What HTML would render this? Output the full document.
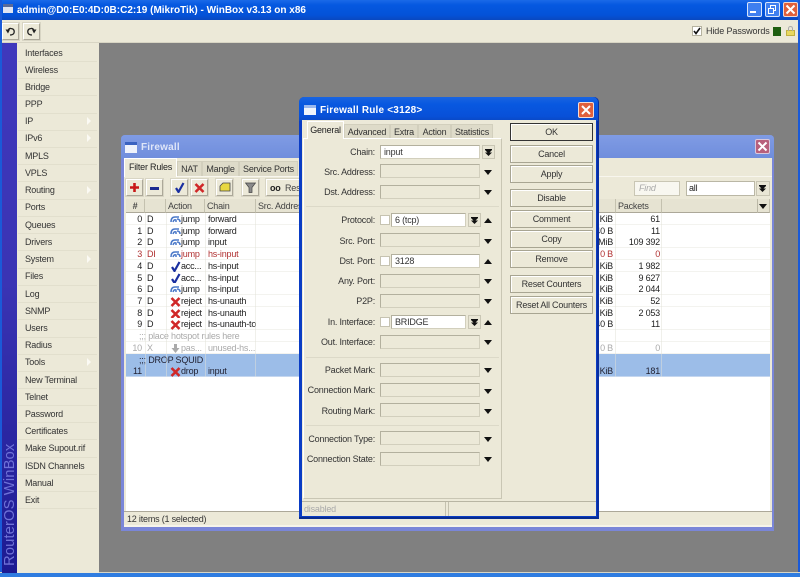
<!DOCTYPE html>
<html><head><meta charset="utf-8"><title>WinBox</title>
<style>
html,body{margin:0;padding:0;width:800px;height:577px;overflow:hidden;background:#808080}
#r{position:absolute;left:0;top:0;width:800px;height:577px;overflow:hidden;font:9px "Liberation Sans",sans-serif;letter-spacing:-.2px;color:#222;filter:blur(.3px)}
#r div,#r span,#r svg{position:absolute;box-sizing:border-box}
.t{white-space:nowrap;line-height:12px;height:12px}
.m{left:25px;white-space:nowrap;line-height:12px;height:12px;color:#333}
.ms{left:18px;width:79px;height:1px;background:#f6f4ea;border-top:1px solid #e2dfcd}
.tri{left:87px;width:0;height:0;border-left:4px solid #fbfaf4;border-top:4px solid transparent;border-bottom:4px solid transparent}
.tb{background:#ece9d8;border:1px solid;border-color:#fff #aca899 #aca899 #fff;box-shadow:0 0 0 1px #d8d5c4}
.tab{background:#dedbc9;border:1px solid #d2cfbd;border-bottom:0;text-align:center;line-height:15px;color:#333;white-space:nowrap}
.tabA{background:#ece9d8;border:1px solid #fff;border-bottom:0;text-align:center;color:#222;white-space:nowrap}
.h{top:199px;height:14px;background:#e6e3d2;border-right:1px solid #c4c1af;border-bottom:1px solid #aca899;line-height:14px;padding-left:2px;color:#444;white-space:nowrap;overflow:hidden}
.row{left:126px;width:644px;height:12px;background:#fff;border-bottom:1px solid #f3f3ef;line-height:12px;color:#222}
.row span{white-space:nowrap;top:0}
.n{left:0;width:16px;text-align:right}.d{left:21px}.a{left:55px}.c{left:82px}.b{left:440px;width:47px;text-align:right}.p{left:490px;width:44px;text-align:right}
.ic{left:44px;top:1px;width:11px;height:11px}
.red{color:#b03030}.gr{color:#aaa}.sel{background:#9cbde8;border-bottom:1px solid #c4d6ef;color:#223}
.l{left:300px;width:75px;text-align:right;white-space:nowrap;line-height:12px;height:12px;color:#333}
.f{left:380px;width:100px;height:14px;background:#ece9d8;border:1px solid;border-color:#b3b09e #d2cfbd #d2cfbd #b3b09e}
.w{background:#fff;line-height:12px;padding-left:3px;color:#333;white-space:nowrap}
.cb{left:380px;width:10px;height:10px;background:#fff;border:1px solid #c6c3b1}
.bn{left:468px;width:13px;height:14px;background:#e9e6d5;border:1px solid #c9c6b4}
.dn{left:484px;width:0;height:0;border-left:4px solid transparent;border-right:4px solid transparent;border-top:5px solid #111}
.up{left:484px;width:0;height:0;border-left:4px solid transparent;border-right:4px solid transparent;border-bottom:5px solid #111}
.btn{left:510px;width:83px;height:18px;background:#ece9d8;border:1px solid #a8a592;box-shadow:inset 1px 1px 0 #fff;text-align:center;line-height:16px;color:#333;white-space:nowrap}
.sp{left:306px;width:193px;height:1px;background:#dcd9c8}
.dbl{width:7px;height:7px}
</style></head><body><div id="r">
<svg width="0" height="0" style="left:0;top:0"><defs>
<symbol id="j" viewBox="0 0 11 11"><path d="M1 8 Q1 3 5 3 L9 3 M10 8 Q10 5 7 5 M3 8 Q4 5 6 6 L6 8" fill="none" stroke="#4a78c8" stroke-width="1.5"/></symbol>
<symbol id="k" viewBox="0 0 11 11"><path d="M2 6 L4.5 10 L9.5 1" fill="none" stroke="#1a2fa0" stroke-width="2.2"/></symbol>
<symbol id="x" viewBox="0 0 11 11"><path d="M1.5 2 L9.5 10 M9.5 2 L1.5 10" fill="none" stroke="#d02828" stroke-width="2.6"/></symbol>
<symbol id="dd" viewBox="0 0 7 7"><path d="M0 0H7V1H0Z M0 1L7 1L3.5 4.5Z M0 3.5L7 3.5L3.5 7Z" fill="#111"/></symbol>
</defs></svg>

<!-- main window chrome -->
<div style="left:0;top:0;width:800px;height:20px;background:linear-gradient(#1a6ae8,#0558e0 25%,#0452d8 75%,#0a48c0)"></div>
<div style="left:3px;top:4px;width:10px;height:9px;background:#dfe4f2;border-top:3px solid #5a6a98"></div>
<div class="t" style="left:17px;top:4px;font:bold 10px 'Liberation Sans',sans-serif;letter-spacing:0;color:#fff;line-height:13px;height:13px">admin@D0:E0:4D:0B:C2:19 (MikroTik) - WinBox v3.13 on x86</div>
<div style="left:747px;top:2px;width:15px;height:15px;background:#3f7ff0;border:1px solid #d8e4fa;border-radius:2px"></div>
<div style="left:750px;top:11px;width:6px;height:2px;background:#fff"></div>
<div style="left:765px;top:2px;width:15px;height:15px;background:#3f7ff0;border:1px solid #d8e4fa;border-radius:2px"></div>
<div style="left:770px;top:5px;width:6px;height:6px;border:1px solid #fff"></div>
<div style="left:768px;top:8px;width:6px;height:6px;border:1px solid #fff;background:#3f7ff0"></div>
<div style="left:783px;top:2px;width:15px;height:15px;background:#e0603c;border:1px solid #f0d8d0;border-radius:2px"></div>
<svg style="left:785px;top:4px" width="11" height="11"><path d="M1.5 1.5 L9.5 9.5 M9.5 1.5 L1.5 9.5" stroke="#fff" stroke-width="2"/></svg>

<div style="left:0;top:20px;width:800px;height:23px;background:#ece9d8;border-bottom:1px solid #d8d5c4"></div>
<div class="tb" style="left:2px;top:23px;width:17px;height:17px"></div>
<svg style="left:5px;top:26px" width="11" height="11"><path d="M3 6 Q3 2 6 2.5 Q10 3 9 7 Q8 9 5 9" fill="none" stroke="#222" stroke-width="1.3"/><path d="M0.5 3.5 L5 3.5 L3 7.5Z" fill="#222"/></svg>
<div class="tb" style="left:23px;top:23px;width:17px;height:17px"></div>
<svg style="left:26px;top:26px" width="11" height="11"><path d="M8 6 Q8 2 5 2.5 Q1 3 2 7 Q3 9 6 9" fill="none" stroke="#222" stroke-width="1.3"/><path d="M10.5 3.5 L6 3.5 L8 7.5Z" fill="#222"/></svg>

<div style="left:692px;top:26px;width:10px;height:10px;background:#fff;border:1px solid #b5b29f"></div>
<svg style="left:693px;top:27px" width="8" height="8"><path d="M1 4 L3 6.5 L7 1" fill="none" stroke="#111" stroke-width="1.6"/></svg>
<div class="t" style="left:706px;top:25px;color:#333;letter-spacing:-.1px">Hide Passwords</div>
<div style="left:773px;top:27px;width:8px;height:9px;background:#1f5f10"></div>
<div style="left:786px;top:30px;width:9px;height:6px;background:#e8d860;border:1px solid #c0b040"></div>
<div style="left:788px;top:26px;width:5px;height:5px;border:1px solid #aaa;border-bottom:0;border-radius:3px 3px 0 0"></div>

<!-- work area -->
<div style="left:99px;top:43px;width:699px;height:530px;background:#808080"></div>
<div style="left:0;top:0;width:2px;height:577px;background:#1a5ad8"></div>
<div style="left:798px;top:0;width:2px;height:577px;background:#1a5ad8"></div>
<div style="left:0;top:572px;width:800px;height:1px;background:#d8d5c4"></div>
<div style="left:0;top:573px;width:800px;height:4px;background:#2f7ce0"></div>

<!-- sidebar -->
<div style="left:2px;top:43px;width:15px;height:530px;background:linear-gradient(#3f38bc,#3a34b4 45%,#1c1a92)"></div>
<div style="left:17px;top:43px;width:82px;height:530px;background:#ece9d8"></div>
<div style="left:2px;top:436px;width:16px;height:130px;line-height:16px;writing-mode:vertical-rl;transform:rotate(180deg);font-size:14.8px;letter-spacing:.1px;color:#6f72d8;white-space:nowrap;text-align:left">RouterOS WinBox</div>
<div class="m" style="top:47px">Interfaces</div><div class="ms" style="top:61px"></div>
<div class="m" style="top:64px">Wireless</div><div class="ms" style="top:78px"></div>
<div class="m" style="top:81px">Bridge</div><div class="ms" style="top:95px"></div>
<div class="m" style="top:98px">PPP</div><div class="ms" style="top:113px"></div>
<div class="m" style="top:115px">IP</div><div class="tri" style="top:117px"></div><div class="ms" style="top:130px"></div>
<div class="m" style="top:132px">IPv6</div><div class="tri" style="top:134px"></div><div class="ms" style="top:147px"></div>
<div class="m" style="top:150px">MPLS</div><div class="ms" style="top:164px"></div>
<div class="m" style="top:167px">VPLS</div><div class="ms" style="top:181px"></div>
<div class="m" style="top:184px">Routing</div><div class="tri" style="top:186px"></div><div class="ms" style="top:199px"></div>
<div class="m" style="top:201px">Ports</div><div class="ms" style="top:216px"></div>
<div class="m" style="top:219px">Queues</div><div class="ms" style="top:233px"></div>
<div class="m" style="top:236px">Drivers</div><div class="ms" style="top:250px"></div>
<div class="m" style="top:253px">System</div><div class="tri" style="top:255px"></div><div class="ms" style="top:268px"></div>
<div class="m" style="top:270px">Files</div><div class="ms" style="top:285px"></div>
<div class="m" style="top:288px">Log</div><div class="ms" style="top:302px"></div>
<div class="m" style="top:305px">SNMP</div><div class="ms" style="top:319px"></div>
<div class="m" style="top:322px">Users</div><div class="ms" style="top:337px"></div>
<div class="m" style="top:339px">Radius</div><div class="ms" style="top:354px"></div>
<div class="m" style="top:356px">Tools</div><div class="tri" style="top:358px"></div><div class="ms" style="top:371px"></div>
<div class="m" style="top:374px">New Terminal</div><div class="ms" style="top:388px"></div>
<div class="m" style="top:391px">Telnet</div><div class="ms" style="top:405px"></div>
<div class="m" style="top:408px">Password</div><div class="ms" style="top:422px"></div>
<div class="m" style="top:425px">Certificates</div><div class="ms" style="top:439px"></div>
<div class="m" style="top:442px">Make Supout.rif</div><div class="ms" style="top:457px"></div>
<div class="m" style="top:460px">ISDN Channels</div><div class="ms" style="top:474px"></div>
<div class="m" style="top:477px">Manual</div><div class="ms" style="top:491px"></div>
<div class="m" style="top:494px">Exit</div><div class="ms" style="top:508px"></div>

<!-- Firewall window -->
<div style="left:121px;top:135px;width:653px;height:396px;background:#7a86d8;border-radius:4px 4px 0 0"></div>
<div style="left:121px;top:135px;width:653px;height:24px;background:linear-gradient(#7f9be4,#6f8ddc);border-radius:4px 4px 0 0"></div>
<div style="left:125px;top:142px;width:12px;height:11px;background:#eef2fb;border-top:3px solid #3a62c0"></div>
<div class="t" style="left:141px;top:141px;font:bold 10px 'Liberation Sans',sans-serif;letter-spacing:.2px;color:#dfe6f8;line-height:13px;height:13px">Firewall</div>
<div style="left:755px;top:139px;width:15px;height:15px;background:#b8607c;border:1px solid #d8c8dc;border-radius:2px"></div>
<svg style="left:757px;top:141px" width="11" height="11"><path d="M1.5 1.5 L9.5 9.5 M9.5 1.5 L1.5 9.5" stroke="#fff" stroke-width="2"/></svg>
<div style="left:124px;top:158px;width:648px;height:369px;background:#ece9d8;border-bottom:2px solid #f6f4ea"></div>
<div class="tab" style="left:177px;top:161px;width:25px;height:16px">NAT</div>
<div class="tab" style="left:202px;top:161px;width:37px;height:16px">Mangle</div>
<div class="tab" style="left:239px;top:161px;width:59px;height:16px">Service Ports</div>
<div class="tabA" style="left:124px;top:158px;width:53px;height:19px;line-height:17px">Filter Rules</div>
<div style="left:177px;top:176px;width:595px;height:1px;background:#f8f6ee"></div>

<div class="tb" style="left:126px;top:179px;width:17px;height:17px"></div>
<svg style="left:129px;top:182px" width="11" height="11"><path d="M5.5 1V10M1 5.5H10" stroke="#c81818" stroke-width="2.6"/></svg>
<div class="tb" style="left:146px;top:179px;width:17px;height:17px"></div>
<div style="left:150px;top:187px;width:9px;height:3px;background:#1c2a90"></div>
<div class="tb" style="left:171px;top:179px;width:17px;height:17px"></div>
<svg style="left:174px;top:182px" width="11" height="11"><use href="#k"/></svg>
<div class="tb" style="left:191px;top:179px;width:17px;height:17px"></div>
<svg style="left:194px;top:182px" width="11" height="11"><use href="#x"/></svg>
<div class="tb" style="left:216px;top:179px;width:17px;height:17px"></div>
<svg style="left:219px;top:182px" width="12" height="11"><path d="M1 9V4L4 1H11V9Z" fill="#e8d840" stroke="#444" stroke-width=".8"/></svg>
<div class="tb" style="left:242px;top:179px;width:17px;height:17px"></div>
<svg style="left:245px;top:182px" width="11" height="11"><path d="M0.5 1H10.5L7 5.5V10.5H4V5.5Z" fill="#8a8a8a" stroke="#444" stroke-width=".7"/></svg>
<div class="tb" style="left:266px;top:179px;width:60px;height:17px;padding:0;line-height:15px"></div>
<div class="t" style="left:270px;top:182px;font-weight:bold;color:#222">oo</div>
<div class="t" style="left:285px;top:182px;color:#444">Reset</div>

<div class="t" style="left:634px;top:181px;width:46px;height:15px;background:#f8f7f0;border:1px solid #c9c6b4;color:#aaa;font-style:italic;padding-left:4px;line-height:13px">Find</div>
<div class="t" style="left:686px;top:181px;width:69px;height:15px;background:#fff;border:1px solid #bab7a5;padding-left:2px;line-height:13px">all</div>
<div style="left:756px;top:181px;width:14px;height:15px;background:#e9e6d5;border:1px solid #c9c6b4"></div>
<svg class="dbl" style="left:759px;top:185px"><use href="#dd"/></svg>

<div style="left:126px;top:213px;width:644px;height:298px;background:#fff"></div>
<div class="h" style="left:126px;width:19px;text-align:center;padding:0;font-weight:bold">#</div>
<div class="h" style="left:145px;width:21px"></div>
<div class="h" style="left:166px;width:39px">Action</div>
<div class="h" style="left:205px;width:51px">Chain</div>
<div class="h" style="left:256px;width:360px">Src. Address</div>
<div class="h" style="left:616px;width:46px">Packets</div>
<div class="h" style="left:662px;width:108px"></div>
<div style="left:757px;top:199px;width:13px;height:14px;border-left:1px solid #bbb8a6"></div>
<div class="dn" style="left:759px;top:204px"></div>

<div class="row" style="top:213px"><span class="n">0</span><span class="d">D</span><svg class="ic"><use href="#j"/></svg><span class="a">jump</span><span class="c">forward</span><span class="b">10 KiB</span><span class="p">61</span></div>
<div class="row" style="top:225px"><span class="n">1</span><span class="d">D</span><svg class="ic"><use href="#j"/></svg><span class="a">jump</span><span class="c">forward</span><span class="b">40 B</span><span class="p">11</span></div>
<div class="row" style="top:236px"><span class="n">2</span><span class="d">D</span><svg class="ic"><use href="#j"/></svg><span class="a">jump</span><span class="c">input</span><span class="b">16 MiB</span><span class="p">109 392</span></div>
<div class="row red" style="top:248px"><span class="n">3</span><span class="d">DI</span><svg class="ic"><use href="#j"/></svg><span class="a">jump</span><span class="c">hs-input</span><span class="b">0 B</span><span class="p">0</span></div>
<div class="row" style="top:260px"><span class="n">4</span><span class="d">D</span><svg class="ic"><use href="#k"/></svg><span class="a">acc...</span><span class="c">hs-input</span><span class="b">90 KiB</span><span class="p">1 982</span></div>
<div class="row" style="top:272px"><span class="n">5</span><span class="d">D</span><svg class="ic"><use href="#k"/></svg><span class="a">acc...</span><span class="c">hs-input</span><span class="b">90 KiB</span><span class="p">9 627</span></div>
<div class="row" style="top:283px"><span class="n">6</span><span class="d">D</span><svg class="ic"><use href="#j"/></svg><span class="a">jump</span><span class="c">hs-input</span><span class="b">90 KiB</span><span class="p">2 044</span></div>
<div class="row" style="top:295px"><span class="n">7</span><span class="d">D</span><svg class="ic"><use href="#x"/></svg><span class="a">reject</span><span class="c">hs-unauth</span><span class="b">90 KiB</span><span class="p">52</span></div>
<div class="row" style="top:307px"><span class="n">8</span><span class="d">D</span><svg class="ic"><use href="#x"/></svg><span class="a">reject</span><span class="c">hs-unauth</span><span class="b">90 KiB</span><span class="p">2 053</span></div>
<div class="row" style="top:318px"><span class="n">9</span><span class="d">D</span><svg class="ic"><use href="#x"/></svg><span class="a">reject</span><span class="c">hs-unauth-to</span><span class="b">40 B</span><span class="p">11</span></div>
<div class="row gr" style="top:330px"><span style="left:13px">;;; place hotspot rules here</span></div>
<div class="row gr" style="top:342px"><span class="n">10</span><span class="d">X</span><svg class="ic" viewBox="0 0 11 11"><path d="M4 1H7V5H9.5L5.5 10L1.5 5H4Z" fill="#aaa"/></svg><span class="a">pas...</span><span class="c">unused-hs...</span><span class="b">0 B</span><span class="p">0</span></div>
<div class="row sel" style="top:354px"><span style="left:13px">;;; DROP SQUID</span></div>
<div class="row sel" style="top:365px"><span class="n">11</span><svg class="ic"><use href="#x"/></svg><span class="a">drop</span><span class="c">input</span><span class="b">90 KiB</span><span class="p">181</span></div>
<div style="left:145px;top:213px;width:1px;height:164px;background:rgba(225,225,215,.5)"></div>
<div style="left:166px;top:213px;width:1px;height:164px;background:rgba(225,225,215,.5)"></div>
<div style="left:205px;top:213px;width:1px;height:164px;background:rgba(225,225,215,.5)"></div>
<div style="left:255px;top:213px;width:1px;height:164px;background:rgba(225,225,215,.5)"></div>
<div style="left:615px;top:213px;width:1px;height:164px;background:rgba(225,225,215,.5)"></div>
<div style="left:661px;top:213px;width:1px;height:164px;background:rgba(225,225,215,.5)"></div>
<div style="left:124px;top:511px;width:648px;height:1px;background:#aca899"></div>
<div class="t" style="left:127px;top:513px;color:#333">12 items (1 selected)</div>

<!-- Dialog -->
<div style="left:299px;top:97px;width:300px;height:422px;background:#0a3cc4;border-radius:5px 5px 0 0;border-bottom:2px solid #082c90;border-right:2px solid #0a2ea0"></div>
<div style="left:299px;top:97px;width:299px;height:24px;background:linear-gradient(#1a64e0,#0858e0 30%,#0850d8 80%,#0a48c4);border-radius:5px 5px 0 0"></div>
<div style="left:304px;top:105px;width:12px;height:10px;background:#f0f4fc;border-top:3px solid #9ab8ee"></div>
<div class="t" style="left:320px;top:104px;font:bold 10px 'Liberation Sans',sans-serif;letter-spacing:.2px;color:#fff;line-height:13px;height:13px">Firewall Rule &lt;3128&gt;</div>
<div style="left:578px;top:102px;width:16px;height:16px;background:#e0603c;border:1px solid #f4dcd4;border-radius:2px"></div>
<svg style="left:580px;top:104px" width="12" height="12"><path d="M2 2 L10 10 M10 2 L2 10" stroke="#fff" stroke-width="2"/></svg>
<div style="left:302px;top:120px;width:294px;height:396px;background:#ece9d8"></div>

<div class="tab" style="left:344px;top:124px;width:46px;height:15px">Advanced</div>
<div class="tab" style="left:390px;top:124px;width:28px;height:15px">Extra</div>
<div class="tab" style="left:418px;top:124px;width:33px;height:15px">Action</div>
<div class="tab" style="left:451px;top:124px;width:42px;height:15px">Statistics</div>
<div style="left:303px;top:138px;width:199px;height:361px;border:1px solid;border-color:#fff #c9c6b4 #c9c6b4 #fff"></div>
<div class="tabA" style="left:307px;top:121px;width:37px;height:18px;line-height:16px">General</div>

<div class="l" style="top:146px">Chain:</div><div class="f w" style="top:145px">input</div>
<div class="bn" style="left:482px;top:145px"></div><svg class="dbl" style="left:485px;top:149px"><use href="#dd"/></svg>
<div class="l" style="top:166px">Src. Address:</div><div class="f" style="top:164px"></div><div class="dn" style="top:170px"></div>
<div class="l" style="top:186px">Dst. Address:</div><div class="f" style="top:185px"></div><div class="dn" style="top:190px"></div>
<div class="sp" style="top:206px"></div>
<div class="l" style="top:214px">Protocol:</div><div class="cb" style="top:215px"></div>
<div class="f w" style="left:391px;width:75px;top:213px">6 (tcp)</div>
<div class="bn" style="top:213px"></div><svg class="dbl" style="left:471px;top:217px"><use href="#dd"/></svg><div class="up" style="top:218px"></div>
<div class="l" style="top:235px">Src. Port:</div><div class="f" style="top:233px"></div><div class="dn" style="top:239px"></div>
<div class="l" style="top:255px">Dst. Port:</div><div class="cb" style="top:256px"></div>
<div class="f w" style="left:391px;width:89px;top:254px">3128</div><div class="up" style="top:259px"></div>
<div class="l" style="top:275px">Any. Port:</div><div class="f" style="top:274px"></div><div class="dn" style="top:279px"></div>
<div class="l" style="top:295px">P2P:</div><div class="f" style="top:294px"></div><div class="dn" style="top:299px"></div>
<div class="l" style="top:316px">In. Interface:</div><div class="cb" style="top:317px"></div>
<div class="f w" style="left:391px;width:75px;top:315px">BRIDGE</div>
<div class="bn" style="top:315px"></div><svg class="dbl" style="left:471px;top:319px"><use href="#dd"/></svg><div class="up" style="top:320px"></div>
<div class="l" style="top:336px">Out. Interface:</div><div class="f" style="top:335px"></div><div class="dn" style="top:340px"></div>
<div class="sp" style="top:357px"></div>
<div class="l" style="top:364px">Packet Mark:</div><div class="f" style="top:363px"></div><div class="dn" style="top:368px"></div>
<div class="l" style="top:384px">Connection Mark:</div><div class="f" style="top:383px"></div><div class="dn" style="top:389px"></div>
<div class="l" style="top:405px">Routing Mark:</div><div class="f" style="top:403px"></div><div class="dn" style="top:409px"></div>
<div class="sp" style="top:425px"></div>
<div class="l" style="top:433px">Connection Type:</div><div class="f" style="top:431px"></div><div class="dn" style="top:437px"></div>
<div class="l" style="top:453px">Connection State:</div><div class="f" style="top:452px"></div><div class="dn" style="top:457px"></div>

<div class="btn" style="top:123px;border:1px solid #333">OK</div>
<div class="btn" style="top:145px">Cancel</div>
<div class="btn" style="top:165px">Apply</div>
<div class="btn" style="top:189px">Disable</div>
<div class="btn" style="top:210px">Comment</div>
<div class="btn" style="top:230px">Copy</div>
<div class="btn" style="top:250px">Remove</div>
<div class="btn" style="top:275px">Reset Counters</div>
<div class="btn" style="top:296px">Reset All Counters</div>

<div style="left:302px;top:501px;width:294px;height:1px;background:#b8b5a3"></div>
<div style="left:445px;top:502px;width:1px;height:14px;background:#c4c1af"></div>
<div style="left:448px;top:502px;width:1px;height:14px;background:#c4c1af"></div>
<div class="t" style="left:304px;top:503px;color:#aaa">disabled</div>
</div></body></html>
